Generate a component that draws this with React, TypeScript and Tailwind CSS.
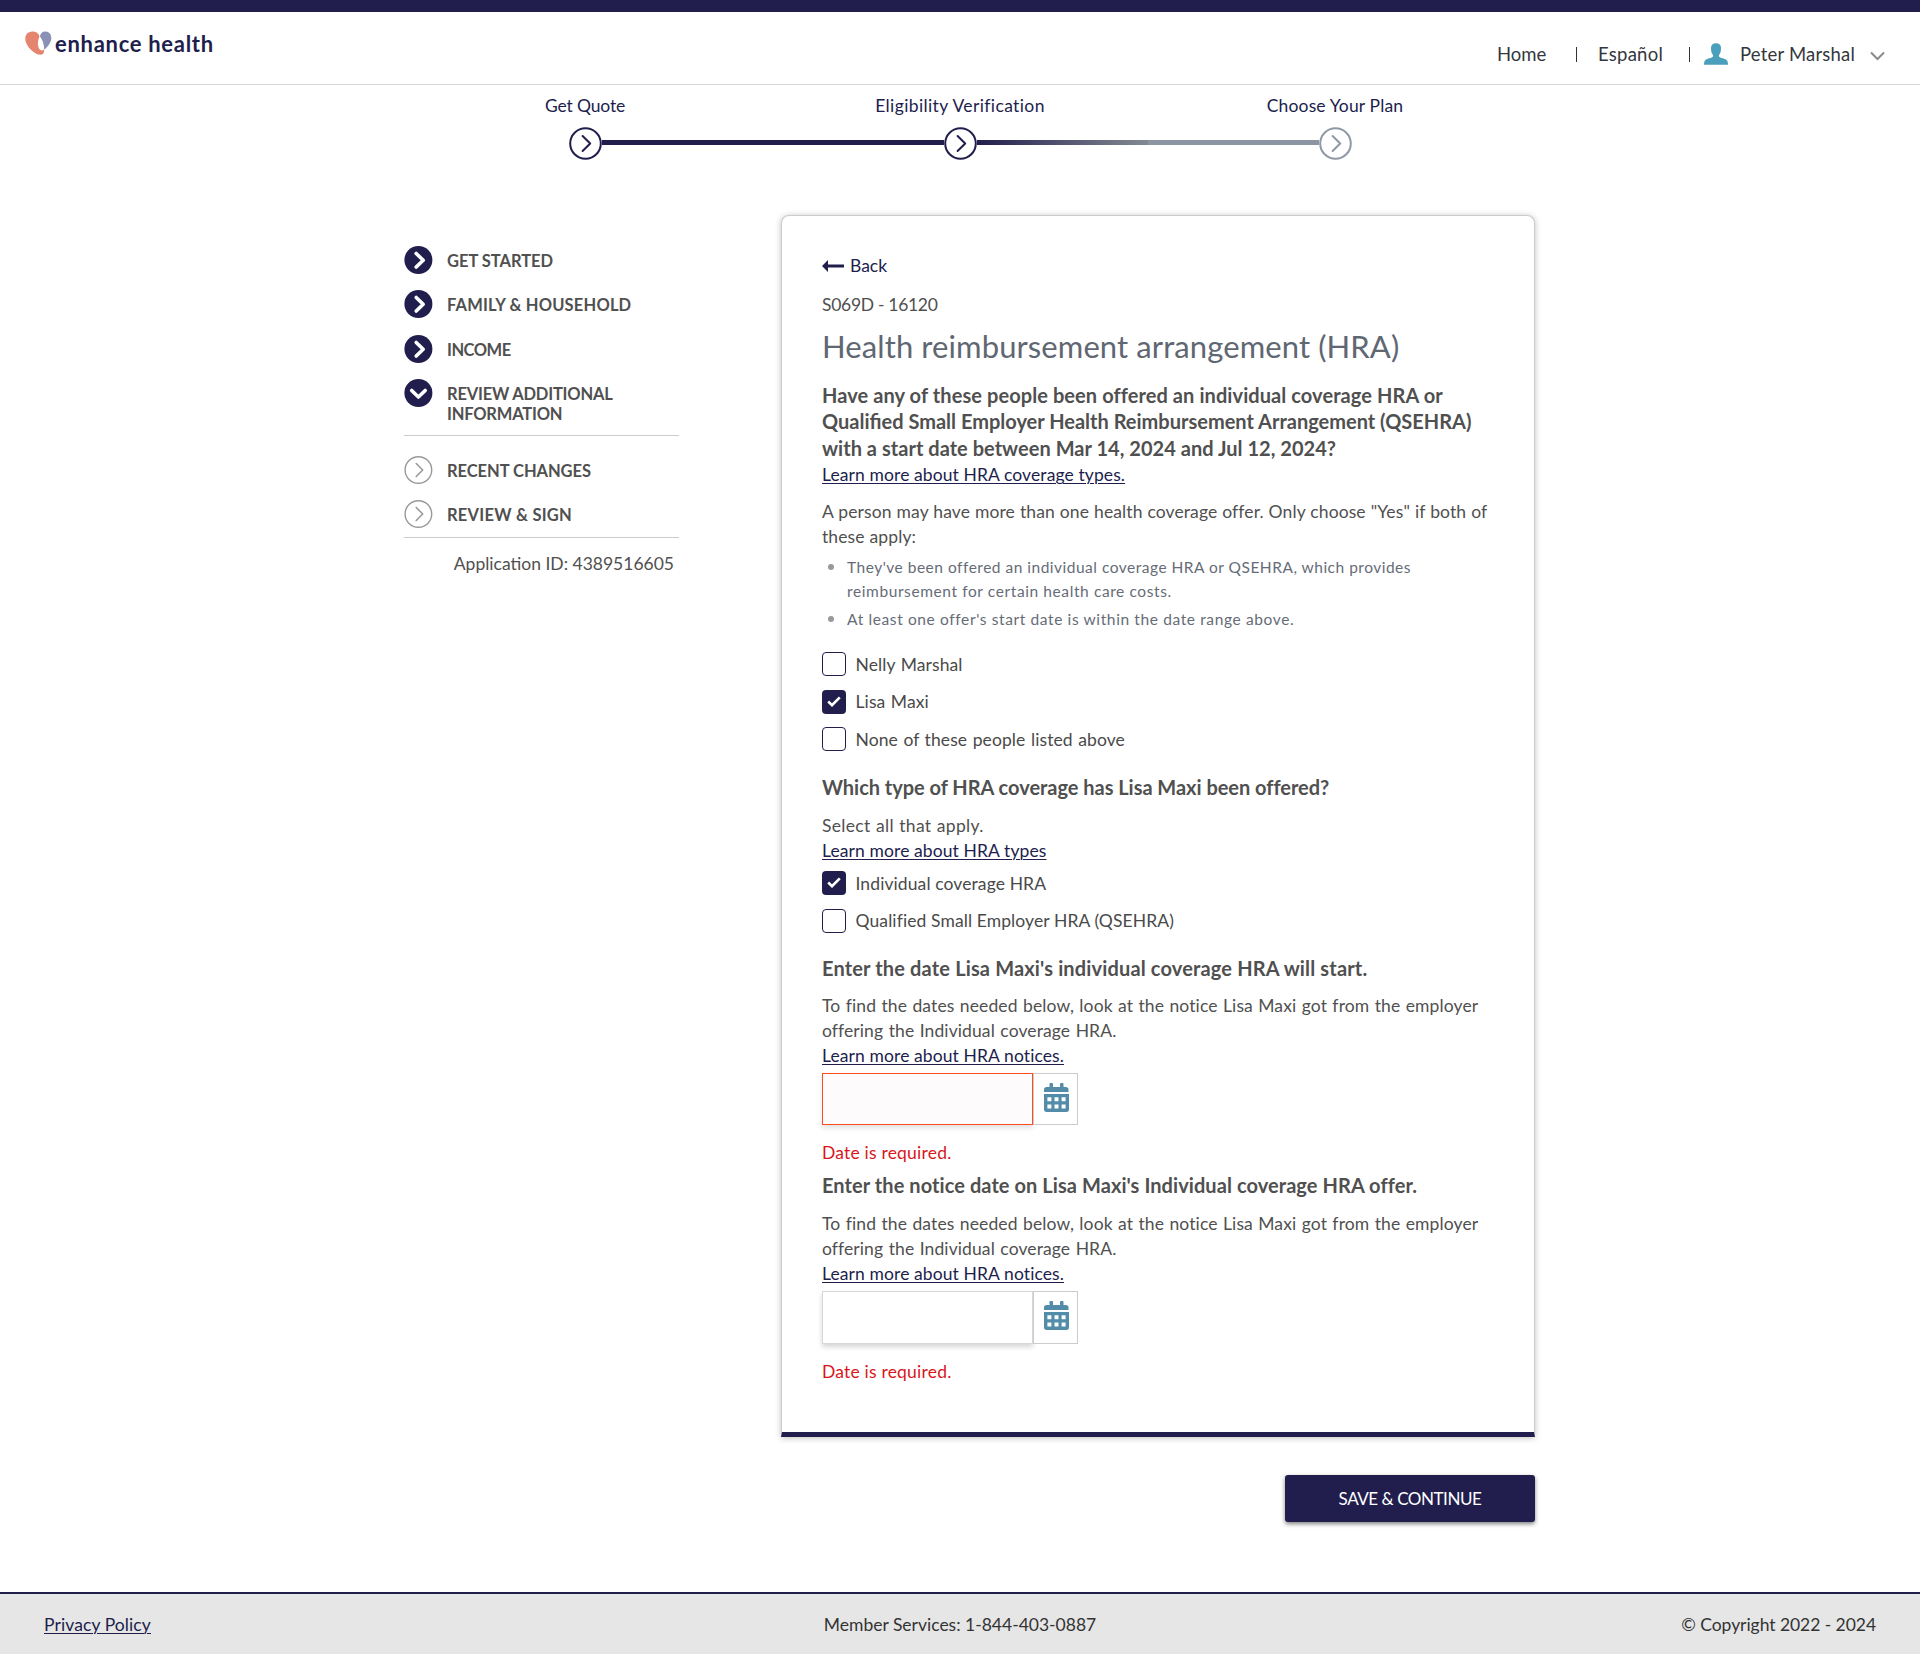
import type { ReactNode } from "react";

function Logo() {
  return (
    <div className="flex h-[26px] items-start pl-[25px]">
      <svg width="27" height="25" viewBox="0 0 27 25" className="shrink-0">
        <path d="M7.2 0.4C11.2 0.2 13.9 2.4 14.5 5.4C13.2 8.2 12.6 11.6 13.1 14.6C13.5 17.6 14.8 19.5 17 19.4C17.8 19.4 18.6 19 19.1 18.6C19.4 21.6 18.1 23.8 15.3 23.8C10.4 23.8 3.6 18.2 1 11.6C-1.2 5.2 1.8 0.7 7.2 0.4Z" fill="#e5856f" />
        <path d="M14.9 5.6C15.4 2.2 17.6 0.3 20.6 0.4C25 0.6 27.2 4.6 26 9.3C25 13 22.3 16.6 19.2 18.7C19.2 14 17.6 8.6 14.9 5.6Z" fill="#8a91b4" />
      </svg>
      <span className="ml-[3px] whitespace-nowrap font-['Lato'] text-[22px] font-bold leading-[26px] tracking-[0.7px] text-[#211e4d]">
        enhance health
      </span>
    </div>
  );
}

function Header() {
  return (
    <header className="flex h-[85px] items-start justify-between border-b border-t-[12px] border-b-[#d8d8d8] border-t-[#211e4d]">
      <div className="pt-[19px]">
        <Logo />
      </div>
      <nav className="mt-[29px] flex h-[26px] items-center pr-[35px] text-[18.5px] leading-[26px] text-[#33373d]">
        <span className="w-[79px]">Home</span>
        <span className="h-[15px] w-px bg-[#333]" />
        <span className="ml-[21px] w-[91px] tracking-[0.25px]">Español</span>
        <span className="h-[15px] w-px bg-[#333]" />
        <svg width="24" height="22" viewBox="0 0 24 22" className="ml-[14px] shrink-0">
          <path d="M12 0.3C15 0.3 17 1.8 17 4.8L16.8 8C16.5 10 15.8 11 15 11.8V13.4C16 15 19 15 21.4 16.2C23.4 17.2 24 18.8 24 21.7H0C0 18.8 0.6 17.2 2.6 16.2C5 15 8 15 9 13.4V11.8C8.2 11 7.5 10 7.2 8L7 4.8C7 1.8 9 0.3 12 0.3Z" fill="#4aa0bc" />
        </svg>
        <span className="ml-[12px] w-[130px] tracking-[0.2px]">Peter Marshal</span>
        <svg width="15" height="10" viewBox="0 0 15 10" fill="none" className="mt-[3px] shrink-0">
          <path d="M1 1.5L7.5 8L14 1.5" stroke="#8a8a8a" strokeWidth="2" />
        </svg>
      </nav>
    </header>
  );
}

function StepMark({ color }: { color: string }) {
  return (
    <svg width="33" height="33" viewBox="0 0 33 33" fill="none" className="shrink-0">
      <circle cx="16.5" cy="16.5" r="15.3" fill="#fff" stroke={color} strokeWidth="2" />
      <path d="M13.6 9L21.2 16.5L13.6 24" stroke={color} strokeWidth="2" strokeLinecap="round" strokeLinejoin="round" />
    </svg>
  );
}

function Stepper() {
  return (
    <div className="mx-auto w-[1125px] pt-[8px]">
      <div className="grid grid-cols-3 text-center text-[17.5px] leading-[25px] text-[#211e4d]">
        <span className="tracking-[-0.15px]">Get Quote</span>
        <span className="tracking-[0.38px]">Eligibility Verification</span>
        <span className="tracking-[0.15px]">Choose Your Plan</span>
      </div>
      <div className="mt-[9px] flex items-center pl-[171.5px] pr-[170.5px]">
        <StepMark color="#211e4d" />
        <span className="mt-[-2px] h-[5px] flex-1 bg-[#211e4d]" />
        <StepMark color="#211e4d" />
        <span className="mt-[-2px] h-[5px] flex-1 bg-[linear-gradient(90deg,#211e4d_0%,#838a92_50%,#8c96a3_50%,#8c96a3_100%)]" />
        <StepMark color="#8f98a6" />
      </div>
    </div>
  );
}

function DoneIcon({ down = false }: { down?: boolean }) {
  return (
    <svg width="29" height="28" viewBox="0 0 29 28" fill="none" className="shrink-0">
      <circle cx="14.4" cy="14" r="14" fill="#211e4d" />
      <path d={down ? "M7.7 11.5L14.4 18L21.2 11.5" : "M12.2 7.5L19.2 14.3L12.2 21"} stroke="#fff" strokeWidth="3.6" strokeLinecap="round" strokeLinejoin="round" />
    </svg>
  );
}

function TodoIcon() {
  return (
    <svg width="29" height="28" viewBox="0 0 29 28" fill="none" className="shrink-0">
      <circle cx="14.4" cy="14" r="13.3" stroke="#999" strokeWidth="1.4" />
      <path d="M12.2 7.5L18.7 14L12.2 20.5" stroke="#999" strokeWidth="1.6" strokeLinecap="round" strokeLinejoin="round" />
    </svg>
  );
}

function SideItem({ icon, children }: { icon: ReactNode; children: ReactNode }) {
  return (
    <li className="flex items-start gap-[14px]">
      {icon}
      <span className="mt-[5px] leading-[20px]">{children}</span>
    </li>
  );
}

function Sidebar() {
  return (
    <aside className="mt-[31px] w-[275px] shrink-0 text-[16.5px] text-[#505050]">
      <ul className="flex h-[190px] flex-col gap-[16.3px] border-b border-[#ccc] font-bold">
        <SideItem icon={<DoneIcon />}><span className="tracking-[-0.03px]">GET STARTED</span></SideItem>
        <SideItem icon={<DoneIcon />}><span className="tracking-[0.17px]">FAMILY &amp; HOUSEHOLD</span></SideItem>
        <SideItem icon={<DoneIcon />}><span className="tracking-[-0.5px]">INCOME</span></SideItem>
        <SideItem icon={<DoneIcon down />}><span className="tracking-[-0.2px]">REVIEW ADDITIONAL<br />INFORMATION</span></SideItem>
      </ul>
      <ul className="flex h-[102px] flex-col gap-[16px] border-b border-[#ccc] pt-[20px] font-bold">
        <SideItem icon={<TodoIcon />}><span className="tracking-[-0.05px]">RECENT CHANGES</span></SideItem>
        <SideItem icon={<TodoIcon />}><span className="tracking-[0.25px]">REVIEW &amp; SIGN</span></SideItem>
      </ul>
      <p className="mt-[13px] whitespace-nowrap pr-[5px] text-right text-[17.5px] leading-[25px]">
        Application ID: 4389516605
      </p>
    </aside>
  );
}

function LearnMore({ children }: { children: ReactNode }) {
  return (
    <a className="block w-fit text-[#211e4d] underline decoration-1 underline-offset-[2px]" href="#">
      {children}
    </a>
  );
}

function Question({ children }: { children: ReactNode }) {
  return <h2 className="text-[20px] font-bold leading-[26.4px] tracking-normal text-[#505050]">{children}</h2>;
}

function Check({ checked = false, label }: { checked?: boolean; label: string }) {
  return (
    <label className="flex h-6 items-center gap-[9.5px] leading-6 text-[#4a4a4a]">
      <span className={checked ? "flex size-6 items-center justify-center rounded-[4px] bg-[#211e4d]" : "size-6 rounded-[4px] border-[1.5px] border-[#211e4d] bg-white"}>
        {checked && (
          <svg width="14" height="11" viewBox="0 0 14 11" fill="none" className="mt-[-1px]">
            <path d="M1.2 5.5L5 9.2L12.8 1.4" stroke="#fff" strokeWidth="2.6" />
          </svg>
        )}
      </span>
      <span className="mt-px">{label}</span>
    </label>
  );
}

function Calendar() {
  return (
    <svg width="25" height="29" viewBox="0 0 25 29" fill="#528ca8" className="ml-[2px]">
      <path d="M5.5 1a1 1 0 0 1 1-1h1.5a1 1 0 0 1 1 1v3h7v-3a1 1 0 0 1 1-1h1.5a1 1 0 0 1 1 1v3h2.3a2.7 2.7 0 0 1 2.7 2.7V9H0V6.7A2.7 2.7 0 0 1 2.7 4h2.8z" />
      <path fillRule="evenodd" d="M0 11h25v15.3a2.7 2.7 0 0 1-2.7 2.7H2.7A2.7 2.7 0 0 1 0 26.3zM3.4 14.2h4v4h-4zM10.5 14.2h4v4h-4zM17.6 14.2h4v4h-4zM3.4 21.5h4v4h-4zM10.5 21.5h4v4h-4zM17.6 21.5h4v4h-4z" />
    </svg>
  );
}

function DateField({ invalid = false }: { invalid?: boolean }) {
  return (
    <div className={invalid ? "mt-[5px] flex h-[52px]" : "mt-[5px] flex h-[53px]"}>
      <input
        className={
          invalid
            ? "w-[211px] border border-[#ff4c1f] bg-[#fdfbfc] shadow-[0_3px_5px_rgba(0,0,0,0.12)] outline-none"
            : "w-[211px] border border-[#d6d9d9] bg-white shadow-[0_3px_5px_rgba(0,0,0,0.17)] outline-none"
        }
      />
      <button className="flex w-[45px] justify-center border border-[#ccc] bg-white pt-[9px]">
        <Calendar />
      </button>
    </div>
  );
}

function DateHelp() {
  return (
    <div>
      <p>
        <span className="tracking-[0.13px] [word-spacing:0.7px]">To find the dates needed below, look at the notice Lisa Maxi got from the employer</span>
        <br />
        <span className="[word-spacing:0.9px]">offering the Individual coverage HRA.</span>
      </p>
      <LearnMore>Learn more about HRA notices.</LearnMore>
    </div>
  );
}

function Bullet({ children }: { children: ReactNode }) {
  return (
    <li className="flex">
      <span className="ml-[6px] mr-[13px] mt-[8px] size-[6px] shrink-0 rounded-full bg-[#999]" />
      <span>{children}</span>
    </li>
  );
}

function Card() {
  return (
    <section className="h-[1222px] w-[754px] rounded-t-lg border border-b-[5px] border-[#ccc] border-b-[#211e4d] bg-white px-[40px] pt-[37px] text-[17.5px] leading-[25px] tracking-[0.1px] text-[#505050] shadow-[0_1px_6px_rgba(0,0,0,0.25)]">
      <a className="flex w-fit items-center gap-[6px] text-[#211e4d]" href="#">
        <svg width="22" height="12" viewBox="0 0 22 12" fill="#211e4d">
          <path d="M0 6L6 0V4.5H22V7.5H6V12Z" />
        </svg>
        <span className="tracking-normal">Back</span>
      </a>
      <p className="mt-[14px] tracking-[-0.3px]">S069D - 16120</p>
      <h1 className="mt-[9px] text-[31px] leading-[40px] text-[#5f6773]">Health reimbursement arrangement (HRA)</h1>
      <div className="mt-[16px]">
        <Question>
          <span className="tracking-[0.08px]">Have any of these people been offered an individual coverage HRA or</span><br />
          Qualified Small Employer Health Reimbursement Arrangement (QSEHRA)<br />
          <span className="tracking-[0.03px]">with a start date between Mar 14, 2024 and Jul 12, 2024?</span>
        </Question>
      </div>
      <div className="mt-[1px]">
        <LearnMore>Learn more about HRA coverage types.</LearnMore>
      </div>
      <p className="mt-[11.5px] [word-spacing:0.4px]">
        A person may have more than one health coverage offer. Only choose "Yes" if both of<br />these apply:
      </p>
      <ul className="mt-[7.5px] flex flex-col gap-[5.5px] text-[15.5px] leading-[23.3px] tracking-[0.5px] text-[#666c77]">
        <Bullet>
          They've been offered an individual coverage HRA or QSEHRA, which provides<br />
          <span className="tracking-[0.6px]">reimbursement for certain health care costs.</span>
        </Bullet>
        <Bullet><span className="tracking-[0.62px]">At least one offer's start date is within the date range above.</span></Bullet>
      </ul>
      <div className="mt-[20.5px] flex flex-col gap-[13.6px] [word-spacing:0.9px]">
        <Check label="Nelly Marshal" />
        <Check label="Lisa Maxi" checked />
        <Check label="None of these people listed above" />
      </div>
      <div className="mt-[22.5px]">
        <Question><span className="tracking-[-0.03px]">Which type of HRA coverage has Lisa Maxi been offered?</span></Question>
      </div>
      <p className="mt-[12.5px] tracking-[0.3px] [word-spacing:0.7px]">Select all that apply.</p>
      <LearnMore>Learn more about HRA types</LearnMore>
      <div className="mt-[8.6px] flex flex-col gap-[13.6px]">
        <Check label="Individual coverage HRA" checked />
        <Check label="Qualified Small Employer HRA (QSEHRA)" />
      </div>
      <div className="mb-[12px] mt-[22px]">
        <Question><span className="tracking-[0.15px]">Enter the date Lisa Maxi's individual coverage HRA will start.</span></Question>
      </div>
      <DateHelp />
      <DateField invalid />
      <p className="mt-[15px] tracking-[0.2px] text-[#d8161c]">Date is required.</p>
      <div className="mb-[12px] mt-[7px]">
        <Question><span className="tracking-[0.07px]">Enter the notice date on Lisa Maxi's Individual coverage HRA offer.</span></Question>
      </div>
      <DateHelp />
      <DateField />
      <p className="mt-[15px] tracking-[0.2px] text-[#d8161c]">Date is required.</p>
    </section>
  );
}

export default function App() {
  return (
    <div className="flex min-h-[1654px] w-full flex-col bg-white font-['Lato','Noto_Sans',sans-serif]">
      <Header />
      <Stepper />
      <main className="flex pl-[404px] pt-[55px]">
        <Sidebar />
        <div className="ml-[102px] flex flex-col items-end">
          <Card />
          <button className="mt-[38px] h-[47px] w-[250px] rounded-[3px] bg-[#211e4d] text-[17px] tracking-[-0.45px] text-white shadow-[0_2px_4px_rgba(0,0,0,0.5)]">
            SAVE &amp; CONTINUE
          </button>
        </div>
      </main>
      <footer className="mt-auto grid h-[62px] grid-cols-3 items-center border-t-2 border-[#211e4d] bg-[#e6e6e6] px-[44px] text-[17.5px] leading-[25px] text-[#333]">
        <a className="w-fit tracking-[0.1px] text-[#211e4d] underline decoration-1 underline-offset-[2px]" href="#">Privacy Policy</a>
        <span className="text-center">Member Services: 1-844-403-0887</span>
        <span className="text-right tracking-[-0.05px]">© Copyright 2022 - 2024</span>
      </footer>
    </div>
  );
}
